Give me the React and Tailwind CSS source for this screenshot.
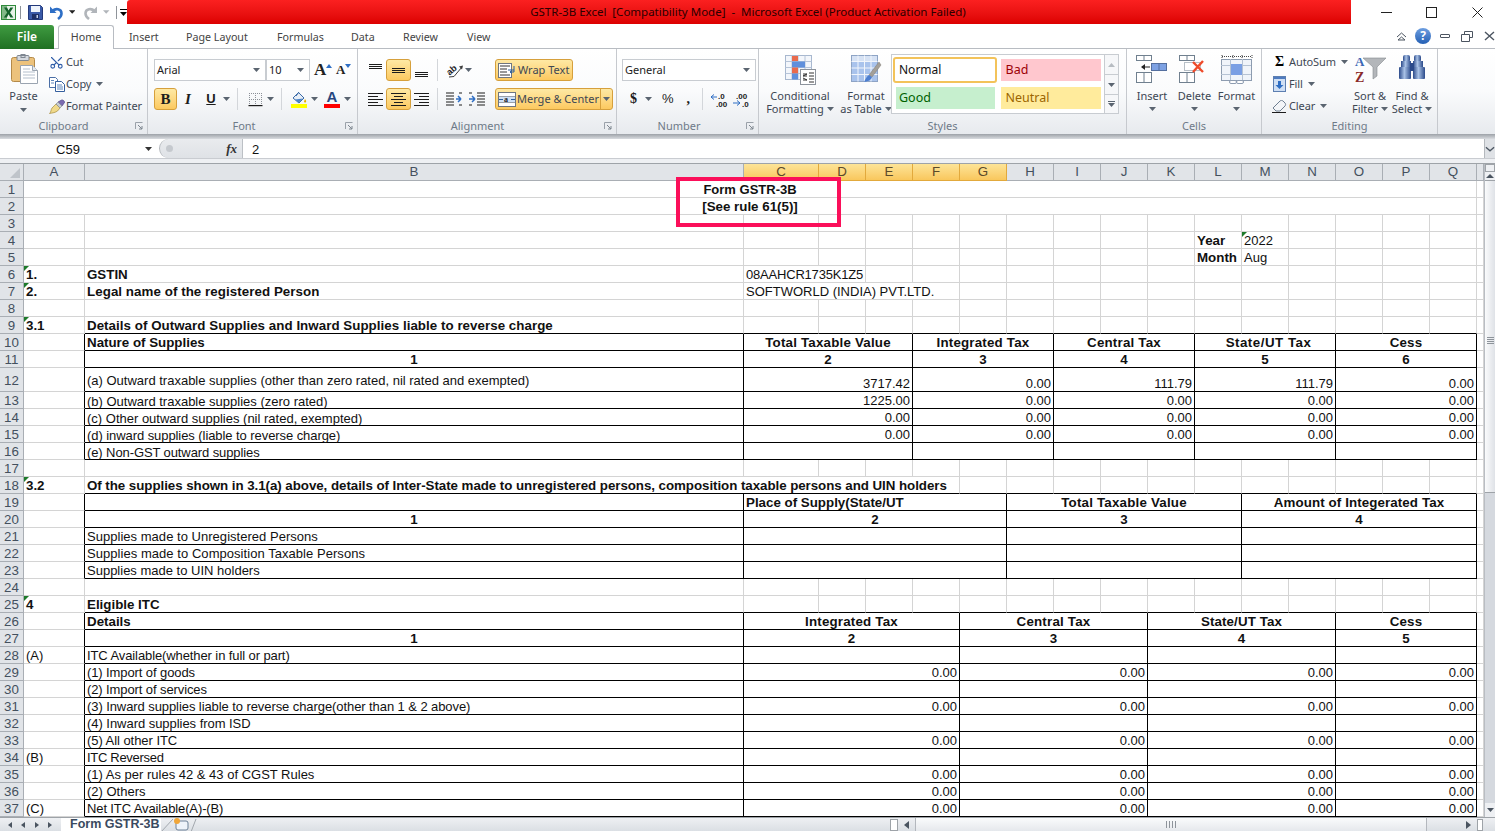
import React from 'react';
import { Scissors } from 'lucide-react';

const SEL = 'bg-linear-to-b from-[#fee9a4] to-[#fcc95f] border border-[#d6a03c] rounded-[3px]';

function Caret({ c = '#5a6470', className = '' }) {
  return <svg width="7" height="4" viewBox="0 0 7 4" className={className}><path d="M0 0h7L3.5 4z" fill={c} /></svg>;
}
function Lines({ rows }) {
  return (
    <svg width="15" height="15" viewBox="0 0 15 15">
      {rows.map(([x, y, w], i) => <rect key={i} x={x} y={y} width={w} height="1" fill="#1c1c1c" />)}
    </svg>
  );
}
function Launcher() {
  return (
    <svg width="8" height="8" viewBox="0 0 8 8" className="shrink-0">
      <path d="M0.5 7V0.5H7.5" fill="none" stroke="#9aa1a9" />
      <path d="M3 3l4 4M7 4v3H4" fill="none" stroke="#7d858e" />
    </svg>
  );
}
function Sep({ className = '' }) {
  return <div className={`w-px h-[22px] bg-[#d3d6da] shrink-0 ${className}`} />;
}
function Group({ w, label, labelClass = '', children }) {
  return (
    <div className={`${w} shrink-0 flex flex-col border-r border-[#c6c9ce]`}>
      <div className="h-[68px] flex">{children}</div>
      <div className="h-[17px] flex items-center relative text-[#6e7a88]">
        <div className={`text-center ${labelClass}`}>{label}</div>
        <div className="absolute right-[4px] top-[5px]">{label === 'Styles' || label === 'Cells' || label === 'Editing' ? null : <Launcher />}</div>
      </div>
    </div>
  );
}
function Combo({ w, text }) {
  return (
    <div className={`${w} h-[22px] bg-white border border-[#c8ccd1] flex items-center justify-between pl-[2px] pr-[5px] text-[#222]`}>
      <span>{text}</span><Caret />
    </div>
  );
}

function ExcelLogo() {
  return (
    <svg width="15" height="15" viewBox="0 0 15 15">
      <rect x="0.5" y="0.5" width="14" height="14" fill="#e6f2e6" stroke="#2f8a3a" />
      <rect x="1" y="1" width="5" height="13" fill="#2f8a3a" opacity=".55" />
      <path d="M3 2.5h3l1.6 3 1.7-3h3L9 7.5l3.4 5h-3L7.6 9.3 5.8 12.5h-3L6.2 7.5z" fill="#14622b" />
    </svg>
  );
}
function SaveIcon() {
  return (
    <svg width="15" height="15" viewBox="0 0 15 15">
      <path d="M0.5 0.5h12l2 2v12h-14z" fill="#3a5aa8" stroke="#23397a" />
      <rect x="3" y="1" width="9" height="6" fill="#eef3fb" />
      <rect x="4" y="9" width="7" height="5" fill="#1d2f66" />
      <rect x="8.5" y="10" width="1.5" height="3" fill="#c6d2ea" />
    </svg>
  );
}
const UNDO = 'M2.5 6c3-3 9-2.500 9 2.500 0 2.500-1.500 4-3.500 5.500';
const REDO = 'M11.500 6c-3-3-9-2.500-9 2.500 0 2.500 1.500 4 3.500 5.500';
function UndoIcon({ c, d }) {
  return (
    <svg width="14" height="15" viewBox="0 0 14 15">
      <path d={d} fill="none" stroke={c} strokeWidth="2.6" />
      <path d={d === UNDO ? 'M0 1.5v6.5h6.5z' : 'M14 1.5v6.5H7.5z'} fill={c} />
    </svg>
  );
}
function PasteIcon() {
  return (
    <svg width="28" height="30" viewBox="0 0 28 30">
      <rect x="0.500" y="3.500" width="23" height="24" rx="2" fill="#ecc27c" stroke="#b48a49" />
      <rect x="6" y="1.500" width="12" height="5" rx="1" fill="#d5d9df" stroke="#7f8791" />
      <rect x="10" y="0.500" width="4" height="3" fill="none" stroke="#7f8791" />
      <path d="M9.500 11.500h12l5 5v13h-17z" fill="#fff" stroke="#9aa4b0" />
      <path d="M21.500 11.500v5h5" fill="#e4e9ef" stroke="#9aa4b0" />
      <path d="M12 15h7M12 18h12M12 21h12M12 24h12" stroke="#b4bfcc" />
    </svg>
  );
}
function CopyIcon() {
  return (
    <svg width="16" height="15" viewBox="0 0 16 15">
      <path d="M0.500 0.500h6l2 2v8h-8z" fill="#fff" stroke="#4b6fa6" />
      <path d="M6.500 4.500h6l3 3v7h-9z" fill="#fff" stroke="#355f9e" />
      <path d="M2 3.500h3M2 6h3M8 8h5M8 10h6M8 12h6" stroke="#5e87bd" />
    </svg>
  );
}
function PainterIcon() {
  return (
    <svg width="16" height="15" viewBox="0 0 16 15">
      <path d="M7 5l4 4-2.500 3c-2 1.500-5 2-8 2.500 2-2 1-3 2.500-5.500z" fill="#f0d98a" stroke="#a58b3e" strokeWidth=".7" />
      <path d="M9 3l4 4 2.500-3.500c.5-1-1.500-3-2.800-2.500z" fill="#7b6bb0" stroke="#4f4385" strokeWidth=".7" />
      <path d="M7 5l2-2 4 4-2 2z" fill="#c6cbd2" stroke="#7c838c" strokeWidth=".6" />
    </svg>
  );
}
function BordersIcon() {
  return (
    <svg width="15" height="15" viewBox="0 0 15 15">
      <path d="M1 1.500h13M1 7.500h13M1.500 1v12M7.500 1v12M13.500 1v12" stroke="#8b9097" strokeDasharray="1 1" fill="none" />
      <rect x="0.500" y="13" width="14" height="1.200" fill="#1c1c1c" />
    </svg>
  );
}
function FillIcon() {
  return (
    <svg width="16" height="17" viewBox="0 0 16 17">
      <path d="M2 7l5.500-5.500L13 7l-5 5z" fill="#e8eef6" stroke="#3a6aa6" />
      <path d="M5 5l3-4" stroke="#3a6aa6" />
      <path d="M4 8.500l8-1-4.500 4.500z" fill="#4a84c9" />
      <path d="M14 8c1 1.500 1.500 2 1 3s-2 .5-2-.5z" fill="#e3b100" />
      <rect x="0" y="13" width="16" height="4" fill="#ffff00" />
    </svg>
  );
}
function AlignLR({ kind }) {
  const m = {
    left: [[0, 1, 15], [0, 4, 10], [0, 7, 15], [0, 10, 10], [0, 13, 15]],
    center: [[0, 1, 15], [3, 4, 9], [0, 7, 15], [3, 10, 9], [0, 13, 15]],
    right: [[0, 1, 15], [5, 4, 10], [0, 7, 15], [5, 10, 10], [0, 13, 15]],
    top: [[1, 1, 13], [1, 3, 13], [1, 5, 13]],
    mid: [[1, 5, 13], [1, 7, 13], [1, 9, 13]],
    bot: [[1, 9, 13], [1, 11, 13], [1, 13, 13]],
  };
  return <Lines rows={m[kind]} />;
}
function Orientation() {
  return (
    <svg width="17" height="15" viewBox="0 0 17 15" className="overflow-visible">
      <text x="0" y="10" fontFamily="Liberation Sans" fontWeight="700" fontSize="9" fill="#222" transform="rotate(-40 5 8)">ab</text>
      <path d="M2 14l5-.5L15 4" fill="none" stroke="#3d3d3d" />
      <path d="M16 2.500l-4 1 3 3z" fill="#3d3d3d" />
    </svg>
  );
}
function Indent({ flip }) {
  return (
    <svg width="16" height="15" viewBox="0 0 16 15" className={flip ? '-scale-x-100' : ''}>
      <path d="M8 1h8M8 4h8M8 7h8M8 10h8M8 13h8M0 1h3M0 13h3" stroke="#1c1c1c" fill="none" />
      <path d={flip ? 'M6 7H1M1 7l3-3M1 7l3 3' : 'M0 7h6M6 7L3 4M6 7l-3 3'} stroke="#2e6ec4" strokeWidth="1.500" fill="none" />
    </svg>
  );
}
function WrapIcon() {
  return (
    <svg width="18" height="15" viewBox="0 0 18 15">
      <rect x="0.500" y="0.500" width="13" height="14" fill="#fff" stroke="#6f7680" />
      <path d="M2 3h10M2 6h7M2 9h7M2 12h10" stroke="#333" fill="none" />
      <path d="M10 7h6M16 3v6h-4M14 7.500l-2 1.500 2 1.500" stroke="#2c5f9e" fill="none" />
    </svg>
  );
}
function MergeIcon() {
  return (
    <svg width="18" height="15" viewBox="0 0 18 15">
      <rect x="0.500" y="0.500" width="17" height="14" fill="#fff" stroke="#6f7680" />
      <path d="M1 4.500h16M1 10.500h16" stroke="#9aa1aa" />
      <rect x="1" y="5" width="16" height="5" fill="#cfe0f5" />
      <text x="6" y="10" fontFamily="Liberation Serif" fontWeight="700" fontSize="8" fill="#222">a</text>
      <path d="M1 7.500h4M13 7.500h4" stroke="#2c5f9e" />
    </svg>
  );
}
function CFIcon() {
  return (
    <svg width="31" height="30" viewBox="0 0 31 30">
      <rect x="0.500" y="0.500" width="26" height="24" fill="#f3f6fb" stroke="#a8b8cf" />
      <path d="M7 .5v24M20 .5v24M.5 6.500h26M.5 12.500h26M.5 18.500h26M13 .5v24" stroke="#b6c4d8" />
      <rect x="7" y="1" width="6" height="5" fill="#e96a4c" />
      <rect x="7" y="6.500" width="13" height="6" fill="#5f8fdc" />
      <rect x="7" y="12.500" width="6" height="6" fill="#e96a4c" />
      <rect x="7" y="18.500" width="6" height="6" fill="#5f8fdc" />
      <rect x="15.500" y="14.500" width="15" height="15" fill="#fff" stroke="#8c939c" />
      <path d="M18 19h4l-4 2h4M18 25h4l-4-2M24 18h5M24 21h5M24 24h5M24 27h5" stroke="#1c1c1c" fill="none" strokeWidth=".9" />
    </svg>
  );
}
function TableIcon() {
  return (
    <svg width="31" height="30" viewBox="0 0 31 30">
      <rect x="0.500" y="0.500" width="26" height="26" fill="#a9c3ec" stroke="#8ea4c5" />
      <rect x="1" y="1" width="25" height="5" fill="#d6e2f4" />
      <path d="M7 .5v26M13.500 .5v26M20 .5v26M.5 6.500h26M.5 13h26M.5 19.500h26" stroke="#f1f5fb" />
      <path d="M28 7L18 20l3 2L30 10z" fill="#a39f98" stroke="#7e7a73" strokeWidth=".5" />
      <path d="M18 20c-2 1-3 3-5 7 3-.5 7-1.500 8-5z" fill="#4d7fd0" />
    </svg>
  );
}
function MiniGrid({ x, y, w = 15, h = 11, n = 2, fill = '#fff' }) {
  const cw = w / n;
  return (
    <g>
      <rect x={x + 0.5} y={y + 0.5} width={w} height={h} fill={fill} stroke="#70808f" />
      {Array.from({ length: n - 1 }).map((_, i) => <path key={i} d={`M${x + 0.5 + cw * (i + 1)} ${y}v${h}`} stroke="#70808f" />)}
    </g>
  );
}
function InsertIcon() {
  return (
    <svg width="32" height="28" viewBox="0 0 32 28">
      <rect x="0.500" y="0.500" width="15" height="5" fill="#fff" stroke="#70808f" /><path d="M8 0v5" stroke="#70808f" />
      <rect x="15.500" y="8.500" width="15" height="7" fill="#7da1e3" stroke="#546f9f" /><path d="M23 8v7" stroke="#546f9f" />
      <path d="M14 12H6" stroke="#222" /><path d="M5 12l4-3v6z" fill="#222" />
      <MiniGrid x={0} y={17} h={10} />
    </svg>
  );
}
function DeleteIcon() {
  return (
    <svg width="32" height="28" viewBox="0 0 32 28">
      <rect x="0.500" y="0.500" width="15" height="5" fill="#fff" stroke="#70808f" /><path d="M8 0v5" stroke="#70808f" />
      <rect x="5.500" y="7.500" width="16" height="8" fill="#fff" stroke="#70808f" strokeDasharray="1 1" />
      <MiniGrid x={0} y={17} h={10} />
      <path d="M14 7l10 10M24 6L14 17" stroke="#ef4b2a" strokeWidth="2.400" />
    </svg>
  );
}
function FormatIcon() {
  return (
    <svg width="32" height="30" viewBox="0 0 32 30">
      <path d="M1 1.500h30M1 0v3M12 0v3M21 0v3M31 0v3" stroke="#444" strokeDasharray="1 1" />
      <rect x="0.500" y="4.500" width="30" height="21" fill="#f0f4fa" stroke="#8d9cb0" />
      <path d="M9.500 4v21M21.500 4v21M0 10.500h30M0 19.500h30" stroke="#b5c2d3" />
      <rect x="10" y="9" width="11" height="11" fill="#7a9fe4" />
      <rect x="8.500" y="25.500" width="7" height="3" rx="1.500" fill="#fff" stroke="#8d9cb0" />
      <rect x="15.500" y="25.500" width="7" height="3" rx="1.500" fill="#fff" stroke="#8d9cb0" />
    </svg>
  );
}
function FillDown() {
  return (
    <svg width="13" height="16" viewBox="0 0 13 16">
      <rect x="0.500" y="0.500" width="12" height="15" fill="#cfdff4" stroke="#5d7fb1" />
      <rect x="1" y="1" width="11" height="2" fill="#4f7cc0" />
      <path d="M5 5h3v4h2.500L6.500 13 2.500 9H5z" fill="#2e6ec4" />
    </svg>
  );
}
function Eraser() {
  return (
    <svg width="15" height="13" viewBox="0 0 15 13">
      <path d="M1 8l7-7c1-.8 2-.8 3 0l2 2c.8 1 .8 2 0 3l-5 5H4z" fill="#f3f5f8" stroke="#6e7e90" />
      <path d="M1 8l3 3" stroke="#6e7e90" />
      <path d="M0 12.500h14" stroke="#1c1c1c" />
    </svg>
  );
}
function SortIcon() {
  return (
    <svg width="31" height="28" viewBox="0 0 31 28" className="overflow-visible">
      <path d="M8 3h23l-9 9v9l-4 3V12z" fill="#b3b6ba" stroke="#85898e" strokeWidth=".6" />
      <text x="0" y="11" fontFamily="Liberation Serif" fontWeight="700" fontSize="13" fill="#3a66b5">A</text>
      <text x="0" y="27" fontFamily="Liberation Serif" fontWeight="700" fontSize="14" fill="#8a2a2a">Z</text>
    </svg>
  );
}
function Binoculars() {
  return (
    <svg width="28" height="25" viewBox="0 0 28 25">
      <defs><linearGradient id="bino" x1="0" x2="1"><stop offset="0" stopColor="#2b4a8a" /><stop offset=".45" stopColor="#a9c2e6" /><stop offset="1" stopColor="#2b4a8a" /></linearGradient></defs>
      <rect x="5" y="0" width="7" height="7" rx="2" fill="url(#bino)" />
      <rect x="16" y="0" width="7" height="7" rx="2" fill="url(#bino)" />
      <rect x="3" y="6" width="10" height="7" fill="url(#bino)" />
      <rect x="15" y="6" width="10" height="7" fill="url(#bino)" />
      <rect x="1" y="12" width="12" height="12" rx="1" fill="url(#bino)" />
      <rect x="15" y="12" width="12" height="12" rx="1" fill="url(#bino)" />
      <rect x="12" y="8" width="4" height="8" fill="#2b4a8a" />
    </svg>
  );
}
function TopGem({ up }) {
  return <svg width="11" height="6" viewBox="0 0 11 6"><path d={up ? 'M1 5l4.500-4 4.500 4' : 'M1 1l4.500 4 4.500-4'} fill="none" stroke="#4d5763" strokeWidth="1.400" /></svg>;
}

function Title() {
  return (
    <div className="h-6 flex shrink-0">
      <div className="w-[127px] flex items-center bg-white">
        <div className="ml-[1px]"><ExcelLogo /></div>
        <div className="w-px h-[13px] bg-[#8f949a] ml-[4px]" />
        <div className="ml-[7px]"><SaveIcon /></div>
        <div className="ml-[7px]"><UndoIcon c="#2e6fc6" d={UNDO} /></div>
        <Caret c="#222" className="ml-[5px]" />
        <div className="ml-[8px]"><UndoIcon c="#b1b5ba" d={REDO} /></div>
        <Caret c="#b1b5ba" className="ml-[6px]" />
        <div className="w-px h-[13px] bg-[#8f949a] ml-[6px]" />
        <div className="ml-[3px] flex flex-col gap-[2px] items-center w-[8px]"><div className="w-[7px] h-px bg-black" /><Caret c="#000" /></div>
      </div>
      <div className="flex-1 bg-linear-to-b from-[#fb2020] to-[#dc0000] rounded-tl-[3px] flex items-center justify-center pl-[18px] text-[11.500px] text-[#2b0000] whitespace-pre">
        GSTR-3B Excel  [Compatibility Mode]  -  Microsoft Excel (Product Activation Failed)
      </div>
      <div className="w-[144px] bg-white flex items-center">
        <div className="ml-[30px] w-[11px] h-px bg-[#222]" />
        <div className="ml-[34px] w-[11px] h-[11px] border border-[#222]" />
        <svg width="11" height="11" viewBox="0 0 11 11" className="ml-[35px]"><path d="M.5.500l10 10M10.500.500l-10 10" stroke="#222" /></svg>
      </div>
    </div>
  );
}

function Tabs() {
  const tab = 'text-[#444] text-[10.700px] absolute top-[6px]';
  return (
    <div className="h-[25px] relative shrink-0 bg-white border-b border-[#b8bcc2]">
      <div className="absolute left-0 top-[1px] w-[54px] h-[24px] bg-linear-to-b from-[#3f9b41] to-[#1f7022] rounded-tr-[3px] text-white font-semibold text-[12px] flex items-center justify-center">File</div>
      <div className="absolute left-[58px] top-[1px] w-[56px] h-[24px] pb-[2px] bg-white border border-b-0 border-[#b8bcc2] rounded-t-[3px] flex items-center justify-center text-[#444] text-[10.700px] z-10">Home</div>
      <span className={`${tab} left-[129px]`}>Insert</span>
      <span className={`${tab} left-[186px]`}>Page Layout</span>
      <span className={`${tab} left-[277px]`}>Formulas</span>
      <span className={`${tab} left-[351px]`}>Data</span>
      <span className={`${tab} left-[403px]`}>Review</span>
      <span className={`${tab} left-[467px]`}>View</span>
      <div className="absolute right-0 top-[3px] flex items-center h-[18px]">
        <svg width="11" height="9" viewBox="0 0 11 9"><path d="M1 5l4.500-4 4.500 4M2 8h7l-3.500-3z" fill="none" stroke="#4b5460" /></svg>
        <div className="ml-[8px] w-[16px] h-[16px] rounded-full bg-linear-to-b from-[#6d9ee0] to-[#2460b4] text-white font-bold text-[12px] leading-[16px] text-center">?</div>
        <div className="ml-[9px] w-[10px] h-[4px] border border-[#4b5460] rounded-[1px]" />
        <svg width="12" height="11" viewBox="0 0 12 11" className="ml-[11px]"><path d="M3.500 3V.5h8v6H9M.5 3.500h8v7h-8z" fill="none" stroke="#4b5460" /></svg>
        <svg width="11" height="10" viewBox="0 0 11 10" className="ml-[11px]"><path d="M1 1l9 8M10 1L1 9" stroke="#4b5460" strokeWidth="1.400" /></svg>
      </div>
    </div>
  );
}

function Small({ icon, label, caret, className = '' }) {
  return (
    <div className={`h-[22px] flex items-center tracking-[-0.1px] ${className}`}>
      <div className="w-[19px] flex justify-center">{icon}</div>
      <span>{label}</span>
      {caret && <Caret className="ml-[5px]" />}
    </div>
  );
}
function BigBtn({ icon, w, l1, l2, caret }) {
  return (
    <div className={`${w} flex flex-col items-center shrink-0`}>
      <div className="h-[40px] flex items-start pt-[6px]">{icon}</div>
      <div className="leading-[13px] whitespace-nowrap">{l1}</div>
      <div className="leading-[13px] whitespace-nowrap flex items-center gap-[3px]">{l2}{caret && <Caret className="mt-[1px]" />}</div>
    </div>
  );
}

function Ribbon() {
  const styleCell = 'h-[22px] flex items-center text-[12.500px]';
  return (
    <div className="h-[85px] flex shrink-0 bg-linear-to-b from-white via-[#fafbfc] to-[#e7eaee] text-[11px] text-[#3d4753]">
      <Group w="w-[148px]" label="Clipboard" labelClass="w-[127px]">
        <div className="w-[47px] flex flex-col items-center">
          <div className="h-[40px] pt-[5px] pl-[2px]"><PasteIcon /></div>
          <div className="leading-[13px]">Paste</div>
          <Caret className="mt-[6px]" />
        </div>
        <div className="pt-[2px]">
          <Small icon={<Scissors size={15} color="#2f5da8" strokeWidth={1.800} className="-rotate-90" />} label="Cut" />
          <Small icon={<CopyIcon />} label="Copy" caret />
          <Small icon={<PainterIcon />} label="Format Painter" />
        </div>
      </Group>
      <Group w="w-[210px]" label="Font" labelClass="w-[192px]">
        <div className="pl-[6px] pt-[10px] flex flex-col gap-[7px]">
          <div className="flex items-center h-[22px]">
            <Combo w="w-[112px]" text="Arial" />
            <Combo w="w-[44px]" text="10" />
            <div className="w-[15px] ml-[4px] flex items-start font-['Liberation_Serif',serif] font-bold text-[17px] text-[#222] relative">A<svg width="6" height="4" viewBox="0 0 6 4" className="absolute left-[12px] top-[1px]"><path d="M0 4l3-4 3 4z" fill="#2e6ec4" /></svg></div>
            <div className="w-[14px] ml-[7px] flex items-end font-['Liberation_Serif',serif] font-bold text-[13px] text-[#222] relative">A<svg width="6" height="4" viewBox="0 0 6 4" className="absolute left-[9px] top-[1px]"><path d="M0 0l3 4 3-4z" fill="#2e6ec4" /></svg></div>
          </div>
          <div className="flex items-center h-[22px] font-['Liberation_Serif',serif] text-[#1c1c1c] text-[15px]">
            <div className={`w-[23px] h-[22px] flex items-center justify-center font-bold ${SEL}`}>B</div>
            <div className="w-[22px] text-center italic font-bold">I</div>
            <div className="w-[24px] text-center underline font-bold font-['Liberation_Sans',sans-serif] text-[13px]">U</div>
            <Caret />
            <Sep className="ml-[7px]" />
            <div className="ml-[10px]"><BordersIcon /></div>
            <Caret className="ml-[4px]" />
            <Sep className="ml-[7px]" />
            <div className="ml-[9px]"><FillIcon /></div>
            <Caret className="ml-[4px]" />
            <div className="ml-[6px] w-[16px] flex flex-col items-center font-['Liberation_Sans',sans-serif] font-bold text-[15px] leading-[14px] text-[#27467f]">A<div className="w-[16px] h-[4px] bg-[#ff0000]" /></div>
            <Caret className="ml-[4px]" />
          </div>
        </div>
      </Group>
      <Group w="w-[259px]" label="Alignment" labelClass="w-[239px]">
        <div className="pl-[10px] pt-[10px] flex flex-col gap-[7px]">
          <div className="flex items-center h-[22px]">
            <AlignLR kind="top" />
            <div className={`ml-[3px] w-[25px] h-[22px] flex items-center justify-center ${SEL}`}><AlignLR kind="mid" /></div>
            <div className="ml-[3px]"><AlignLR kind="bot" /></div>
            <Sep className="ml-[8px]" />
            <div className="ml-[9px]"><Orientation /></div>
            <Caret className="ml-[1px]" />
            <Sep className="ml-[8px] bg-transparent" />
            <div className={`ml-[14px] w-[78px] h-[22px] flex items-center gap-[2px] pl-[2px] ${SEL}`}><WrapIcon />Wrap Text</div>
          </div>
          <div className="flex items-center h-[22px]">
            <AlignLR kind="left" />
            <div className={`ml-[3px] w-[25px] h-[22px] flex items-center justify-center ${SEL}`}><AlignLR kind="center" /></div>
            <div className="ml-[3px]"><AlignLR kind="right" /></div>
            <Sep className="ml-[8px]" />
            <div className="ml-[8px]"><Indent flip /></div>
            <div className="ml-[7px]"><Indent /></div>
            <Sep className="ml-[7px] bg-transparent" />
            <div className={`ml-[2px] w-[118px] h-[22px] flex items-center pl-[2px] ${SEL}`}>
              <MergeIcon /><span className="ml-[1px] flex-1 whitespace-nowrap">Merge &amp; Center</span>
              <div className="w-[12px] h-full border-l border-[#d6a03c] flex items-center justify-center"><Caret /></div>
            </div>
          </div>
        </div>
      </Group>
      <Group w="w-[142px]" label="Number" labelClass="w-[124px]">
        <div className="pl-[5px] pt-[10px] flex flex-col gap-[7px]">
          <Combo w="w-[134px]" text="General" />
          <div className="flex items-center h-[22px] text-[#1c1c1c]">
            <span className="ml-[8px] w-[7px] font-['Liberation_Serif',serif] font-bold text-[14px]">$</span>
            <Caret className="ml-[8px]" />
            <span className="ml-[10px] text-[13px] font-['Liberation_Sans',sans-serif]">%</span>
            <span className="ml-[13px] font-['Liberation_Serif',serif] font-bold text-[14px]">,</span>
            <Sep className="ml-[12px]" />
            <svg width="20" height="15" viewBox="0 0 20 15" className="ml-[8px]">
              <text x="7" y="7" fontFamily="Liberation Sans" fontWeight="700" fontSize="8" fill="#222">.0</text>
              <text x="5" y="14.500" fontFamily="Liberation Sans" fontWeight="700" fontSize="8" fill="#222">.00</text>
              <path d="M0 5h6M0 5l3-2.500M0 5l3 2.500" stroke="#2e6ec4" fill="none" />
            </svg>
            <svg width="18" height="15" viewBox="0 0 18 15" className="ml-[2px]">
              <text x="3" y="7" fontFamily="Liberation Sans" fontWeight="700" fontSize="8" fill="#222">.00</text>
              <text x="9" y="14.500" fontFamily="Liberation Sans" fontWeight="700" fontSize="8" fill="#222">.0</text>
              <path d="M0 11h7M7 11l-3-2.500M7 11l-3 2.500" stroke="#2e6ec4" fill="none" />
            </svg>
          </div>
        </div>
      </Group>
      <Group w="w-[368px]" label="Styles" labelClass="w-[398px]">
        <BigBtn w="w-[82px]" icon={<CFIcon />} l1="Conditional" l2="Formatting" caret />
        <BigBtn w="w-[50px]" icon={<TableIcon />} l1="Format" l2="as Table" caret />
        <div className="mt-[5px] w-[228px] h-[60px] border border-[#c8ccd1] bg-white flex">
          <div className="w-[106px] flex flex-col pl-[1px] pt-[2px]">
            <div className="h-[26px] w-[104px] flex items-center pl-[4px] text-[12px] text-[#111] bg-white border-2 border-[#f3c35a] rounded-[3px]">Normal</div>
            <div className={`${styleCell} pl-[3px] mt-[4px] ml-[3px] w-[99px] bg-[#c6efce] text-[#006100]`}>Good</div>
          </div>
          <div className="w-[107px] flex flex-col gap-[6px] pl-[3px] pt-[4px]">
            <div className={`${styleCell} pl-[5px] w-[100px] bg-[#ffc7ce] text-[#9c0006]`}>Bad</div>
            <div className={`${styleCell} pl-[5px] w-[100px] bg-[#ffeb9c] text-[#9c6500]`}>Neutral</div>
          </div>
          <div className="w-[14px] ml-auto border-l border-[#c8ccd1] flex flex-col bg-[#f6f7f9]">
            <div className="h-[20px] flex items-center justify-center border-b border-[#c8ccd1]"><svg width="7" height="4" viewBox="0 0 7 4"><path d="M0 4h7L3.500 0z" fill="#b7bcc2" /></svg></div>
            <div className="h-[20px] flex items-center justify-center border-b border-[#c8ccd1]"><Caret /></div>
            <div className="flex-1 flex flex-col items-center justify-center gap-[1px]"><div className="w-[7px] h-px bg-[#5a6470]" /><Caret /></div>
          </div>
        </div>
      </Group>
      <Group w="w-[135px]" label="Cells" labelClass="w-[136px]">
        <div className="ml-[3px] flex">
          <BigBtn w="w-[44px]" icon={<InsertIcon />} l1="Insert" l2={<Caret className="mt-[5px]" />} />
          <BigBtn w="w-[41px]" icon={<DeleteIcon />} l1="Delete" l2={<Caret className="mt-[5px]" />} />
          <BigBtn w="w-[43px]" icon={<FormatIcon />} l1="Format" l2={<Caret className="mt-[5px]" />} />
        </div>
      </Group>
      <Group w="w-[176px]" label="Editing" labelClass="w-[176px]">
        <div className="pt-[2px] pl-[8px] w-[87px] shrink-0">
          <Small icon={<span className="font-['Liberation_Serif',serif] font-bold text-[14px] text-black">Σ</span>} label="AutoSum" caret />
          <Small icon={<FillDown />} label="Fill" caret />
          <Small icon={<Eraser />} label="Clear" caret />
        </div>
        <BigBtn w="w-[42px]" icon={<SortIcon />} l1="Sort &" l2="Filter" caret />
        <BigBtn w="w-[42px]" icon={<Binoculars />} l1="Find &" l2="Select" caret />
      </Group>
      <div className="flex-1" />
    </div>
  );
}

function FormulaBar() {
  return (
    <div className="shrink-0 font-['Liberation_Sans',Arial,sans-serif]">
      <div className="h-[5px] bg-linear-to-b from-[#9da2a8] to-[#d9dce0]" />
      <div className="h-[20px] bg-white flex items-center text-[13px] text-[#111] border-b border-[#c9ccd1]">
        <div className="w-[155px] flex items-center">
          <div className="w-[136px] text-center pt-[2px]">C59</div>
          <Caret c="#333" className="ml-[9px]" />
        </div>
        <div className="ml-[4px] w-[84px] h-full bg-linear-to-b from-[#e9ebee] to-[#dfe2e6] rounded-l-[10px] border-l border-[#b4b8bd] border-r border-r-[#bcc0c5] flex items-center justify-between pl-[6px] pr-[5px]">
          <div className="w-[7px] h-[7px] rounded-full bg-[#c5c9ce]" />
          <span className="font-['Liberation_Serif',serif] italic font-bold text-[#333]">fx</span>
        </div>
        <div className="pl-[9px] pt-[2px] flex-1">2</div>
        <div className="w-[11px] h-full bg-[#dfe2e6] border-l border-[#b4b8bd] flex items-center justify-center"><TopGem /></div>
      </div>
      <div className="h-[5px] bg-[#eef0f3] border-b border-[#9ea3a8]" />
    </div>
  );
}

const b = true;
const HT = 'tracking-[0.2px]';
const blanks = (n, p = {}) => Array.from({ length: n }, () => p);
const k = { k: 1 };
const head = (s, t, extra = {}) => ({ s, t, b, a: 'c', k: 1, cls: /[A-Za-z]/.test(t) ? HT : '', ...extra });
const AR = { ar: 1 };
const T12 = (t, v, h, cls) => ({
  h,
  cells: [AR, { t, k: 1, mid: h ? 1 : 0, nudge: h ? 0 : 1, cls }, ...v.map((x) => ({ s: 3, t: x, a: 'r', k: 1 }))],
});
const itc = (a, t, v, cls) => ({
  cells: [{ t: a, ar: 1 }, { t, k: 1, cls },
    { s: 4, t: v ? '0.00' : '', a: 'r', k: 1 }, { s: 4, t: v ? '0.00' : '', a: 'r', k: 1 },
    { s: 4, t: v ? '0.00' : '', a: 'r', k: 1 }, { s: 3, t: v ? '0.00' : '', a: 'r', k: 1 }],
});
const t32 = (t, cls) => ({ cells: [AR, { t, k: 1, cls }, { s: 5, k: 1 }, { s: 5, k: 1 }, { s: 5, k: 1 }] });

const ROWS = [
  { cells: [{ s: 17, t: 'Form GSTR-3B', b, a: 'c', cls: 'text-[13px]' }] },
  { cells: [{ s: 17, t: '[See rule 61(5)]', b, a: 'c' }] },
  { cells: [] },
  { cells: [...blanks(11), { t: 'Year', b }, { t: '2022', tri: 1 }] },
  { cells: [...blanks(11), { t: 'Month', b }, { t: 'Aug' }] },
  { cells: [{ t: '1.', b, tri: 1 }, { t: 'GSTIN', b }, { s: 2, t: '08AAHCR1735K1Z5', cls: 'tracking-[-0.2px]' }] },
  { cells: [{ t: '2.', b, tri: 1 }, { t: 'Legal name of the registered Person', b, cls: 'tracking-[0.06px]' }, { s: 4, t: 'SOFTWORLD (INDIA) PVT.LTD.' }] },
  { cells: [] },
  { cells: [{ t: '3.1', b, tri: 1 }, { t: 'Details of Outward Supplies and Inward Supplies liable to reverse charge', b, bb: 1, cls: 'tracking-[0.04px]' }, ...blanks(15, { bb: 1 })] },
  { cells: [AR, { t: 'Nature of Supplies', b, k: 1 }, head(3, 'Total Taxable Value'), head(3, 'Integrated Tax'), head(3, 'Central Tax'), head(3, 'State/UT Tax', { cls: 'tracking-[0.5px] pl-[9px]' }), head(3, 'Cess')] },
  { cells: [AR, head(1, '1'), head(3, '2'), head(3, '3'), head(3, '4'), head(3, '5'), head(3, '6')] },
  T12('(a) Outward traxable supplies (other than zero rated, nil rated and exempted)', ['3717.42', '0.00', '111.79', '111.79', '0.00'], 1),
  T12('(b) Outward traxable supplies (zero rated)', ['1225.00', '0.00', '0.00', '0.00', '0.00']),
  T12('(c) Other outward supplies (nil rated, exempted)', ['0.00', '0.00', '0.00', '0.00', '0.00']),
  T12('(d) inward supplies (liable to reverse charge)', ['0.00', '0.00', '0.00', '0.00', '0.00'], 0, 'tracking-[-0.07px]'),
  T12('(e) Non-GST outward supplies', ['', '', '', '', ''], 0, 'tracking-[-0.1px]'),
  { cells: [] },
  { cells: [{ t: '3.2', b, tri: 1 }, { s: 5, t: 'Of the supplies shown in 3.1(a) above, details of Inter-State made to unregistered persons, composition taxable persons and UIN holders', b, bb: 1, cls: 'tracking-[-0.05px]' }, ...blanks(11, { bb: 1 })] },
  { cells: [AR, k, { s: 5, t: 'Place of Supply(State/UT', b, k: 1 }, head(5, 'Total Taxable Value'), head(5, 'Amount of Integerated Tax', { cls: 'tracking-[0.1px]' })] },
  { cells: [AR, head(1, '1'), head(5, '2'), head(5, '3'), head(5, '4')] },
  t32('Supplies made to Unregistered Persons', 'tracking-[0.03px]'),
  t32('Supplies made to Composition Taxable Persons', 'tracking-[0.05px]'),
  t32('Supplies made to UIN holders'),
  { cells: [] },
  { cells: [{ t: '4', b, tri: 1 }, { t: 'Eligible ITC', b, bb: 1 }, ...blanks(15, { bb: 1 })] },
  { cells: [AR, { t: 'Details', b, k: 1 }, head(4, 'Integrated Tax'), head(4, 'Central Tax'), head(4, 'State/UT Tax', { cls: 'tracking-[0.1px]' }), head(3, 'Cess')] },
  { cells: [AR, head(1, '1'), head(4, '2'), head(4, '3'), head(4, '4'), head(3, '5')] },
  itc('(A)', 'ITC Available(whether in full or part)', 0, 'tracking-[-0.1px]'),
  itc('', '(1) Import of goods', 1, 'tracking-[-0.1px]'),
  itc('', '(2) Import of services', 0, 'tracking-[-0.1px]'),
  itc('', '(3) Inward supplies liable to reverse charge(other than 1 & 2 above)', 1, 'tracking-[-0.08px]'),
  itc('', '(4) Inward supplies from ISD', 0, 'tracking-[-0.04px]'),
  itc('', '(5) All other ITC', 1, 'tracking-[-0.05px]'),
  itc('(B)', 'ITC Reversed', 0, 'tracking-[-0.3px]'),
  itc('', '(1) As per rules 42 & 43 of CGST Rules', 1),
  itc('', '(2) Others', 1),
  itc('(C)', 'Net ITC Available(A)-(B)', 1, 'tracking-[-0.12px]'),
];
const COLS = ['A', 'B', 'C', 'D', 'E', 'F', 'G', 'H', 'I', 'J', 'K', 'L', 'M', 'N', 'O', 'P', 'Q', ''];

function Cell({ c }) {
  const right = c.k || c.ar ? 'border-r-black' : 'border-r-[#d4d4d4]';
  const bottom = c.k || c.bb ? 'border-b-black' : 'border-b-[#d4d4d4]';
  const align = c.a === 'c' ? 'text-center' : c.a === 'r' ? 'text-right' : 'text-left';
  return (
    <td colSpan={c.s || 1} className={`relative p-0 px-[2px] border-r border-b whitespace-nowrap leading-[16px] ${c.mid ? 'align-middle' : 'align-bottom'} ${right} ${bottom} ${align} ${c.b ? 'font-bold text-[13.330px]' : ''} ${c.cls || ''}`}>
      {c.tri ? <svg width="5" height="5" viewBox="0 0 5 5" className="absolute left-0 top-0"><path d="M0 0h5L0 5z" fill="#1d7a2a" /></svg> : null}
      {c.t ? <span className={`inline-block ${c.nudge ? 'translate-y-[2px]' : 'translate-y-px'}`}>{c.t}</span> : null}
    </td>
  );
}

function Sheet() {
  return (
    <div className="flex-1 flex min-h-0 font-['Liberation_Sans',Arial,sans-serif] text-[13px] text-[#111] bg-white">
      <table className="table-fixed border-separate border-spacing-0 w-[1484px] shrink-0 self-start">
        <colgroup>
          <col className="w-[24px]" /><col className="w-[61px]" /><col className="w-[659px]" /><col className="w-[75px]" />
          {Array.from({ length: 14 }, (_, i) => <col key={i} className="w-[47px]" />)}
          <col className="w-[7px]" />
        </colgroup>
        <thead>
          <tr className="h-[17px]">
            <th className="p-0 bg-[#e1e4e8] border-r border-b border-[#a9aeb4] relative">
              <svg width="10" height="10" viewBox="0 0 10 10" className="absolute right-[3px] bottom-[2px]"><path d="M10 0v10H0z" fill="#bfc4ca" /></svg>
            </th>
            {COLS.map((c, i) => (
              <th key={i} className={`p-0 font-normal text-[13.330px] leading-[16px] text-center border-r border-b ${i >= 2 && i <= 6 ? 'bg-linear-to-b from-[#fde497] to-[#f9c75c] border-[#e2a93c] text-[#5b4a2a]' : 'bg-[#e1e4e8] border-[#a9aeb4] text-[#44505e]'}`}>{c}</th>
            ))}
          </tr>
        </thead>
        <tbody>
          {ROWS.map((r, i) => {
            const used = r.cells.reduce((n, c) => n + (c.s || 1), 0);
            const fill = blanks(18 - used);
            return (
              <tr key={i} className={r.h ? 'h-[24px]' : 'h-[17px]'}>
                <th className="p-0 font-normal text-[13.330px] leading-[16px] text-center bg-[#e1e4e8] border-r border-b border-[#a9aeb4] text-[#44505e]"><span className="inline-block translate-y-px">{i + 1}</span></th>
                {[...r.cells, ...fill].map((c, j) => <Cell key={j} c={c} />)}
              </tr>
            );
          })}
        </tbody>
      </table>
      <div className="w-[11px] bg-[#d5d9df] flex flex-col shrink-0 border-l border-[#b9bdc3]">
        <div className="h-[8px] bg-[#eef0f3] border border-[#9ea3a8]" />
        <div className="h-[8px] bg-[#eef0f3] flex items-center justify-center"><svg width="8" height="4" viewBox="0 0 8 4"><path d="M0 4h8L4 0z" fill="#4a5460" /></svg></div>
        <div className="h-[313px] pt-[7px] bg-linear-to-r from-[#fafbfc] to-[#dfe2e7] border-y border-[#9ea3a8] flex flex-col items-center justify-center gap-[1px]">
          <div className="w-[7px] h-px bg-[#8d939a]" /><div className="w-[7px] h-px bg-[#8d939a]" /><div className="w-[7px] h-px bg-[#8d939a]" /><div className="w-[7px] h-px bg-[#8d939a]" />
        </div>
        <div className="flex-1" />
        <div className="h-[14px] bg-[#eef0f3] flex items-center justify-center"><Caret c="#4a5460" /></div>
      </div>
    </div>
  );
}

function Footer() {
  const arrow = (d) => <svg width="8" height="8" viewBox="0 0 8 8"><path d={d} fill="#4a5460" /></svg>;
  return (
    <div className="h-[14px] shrink-0 flex items-center bg-linear-to-b from-[#eef0f3] to-[#dbdfe4] border-t border-[#9ea3a8] overflow-hidden font-['Liberation_Sans',Arial,sans-serif]">
      <div className="w-[60px] flex justify-around px-[2px]">
        {arrow('M1 1v6M7 1L3 4l4 3z')}{arrow('M6 1L2 4l4 3z')}{arrow('M2 1l4 3-4 3z')}{arrow('M7 1v6M1 1l4 3-4 3z')}
      </div>
      <div className="ml-[1px] w-[100px] h-full bg-white pl-[9px] text-[12.500px] font-bold text-[#3a4a60] leading-[13px] whitespace-nowrap">Form GSTR-3B</div>
      <svg width="36" height="14" viewBox="0 0 36 14">
        <path d="M0 14L12 1M35 1L30 14" stroke="#a3a8ae" />
        <rect x="15" y="3" width="12" height="9" rx="2" fill="#eef3fa" stroke="#6f8299" />
        <circle cx="16" cy="3" r="3" fill="#f0a63a" />
      </svg>
      <div className="flex-1" />
      <div className="w-[8px] h-[12px] bg-white border border-[#9ea3a8]" />
      <svg width="7" height="8" viewBox="0 0 7 8" className="ml-[5px]"><path d="M6 0L1 4l5 4z" fill="#4a5460" /></svg>
      <div className="ml-[5px] w-[512px] h-full bg-linear-to-b from-[#fafbfc] to-[#e5e8ec] border-x border-[#b3b7bd] flex items-center justify-center gap-[1px]">
        <div className="w-px h-[7px] bg-[#8d939a]" /><div className="w-px h-[7px] bg-[#8d939a] ml-px" /><div className="w-px h-[7px] bg-[#8d939a] ml-px" /><div className="w-px h-[7px] bg-[#8d939a] ml-px" />
      </div>
      <div className="w-[38px]" />
      <svg width="7" height="8" viewBox="0 0 7 8"><path d="M1 0l5 4-5 4z" fill="#4a5460" /></svg>
      <div className="ml-[5px] mr-[12px] w-[6px] h-[12px] bg-white border border-[#9ea3a8]" />
    </div>
  );
}

export default function App() {
  return (
    <div className="relative w-[1495px] h-[831px] overflow-hidden flex flex-col bg-white font-['Noto_Sans',sans-serif] text-[11px] leading-[14px]">
      <Title />
      <Tabs />
      <Ribbon />
      <FormulaBar />
      <Sheet />
      <Footer />
      <div className="absolute left-[676px] top-[177px] w-[165px] h-[50px] border-4 border-[#fb0f5a] pointer-events-none" />
    </div>
  );
}
